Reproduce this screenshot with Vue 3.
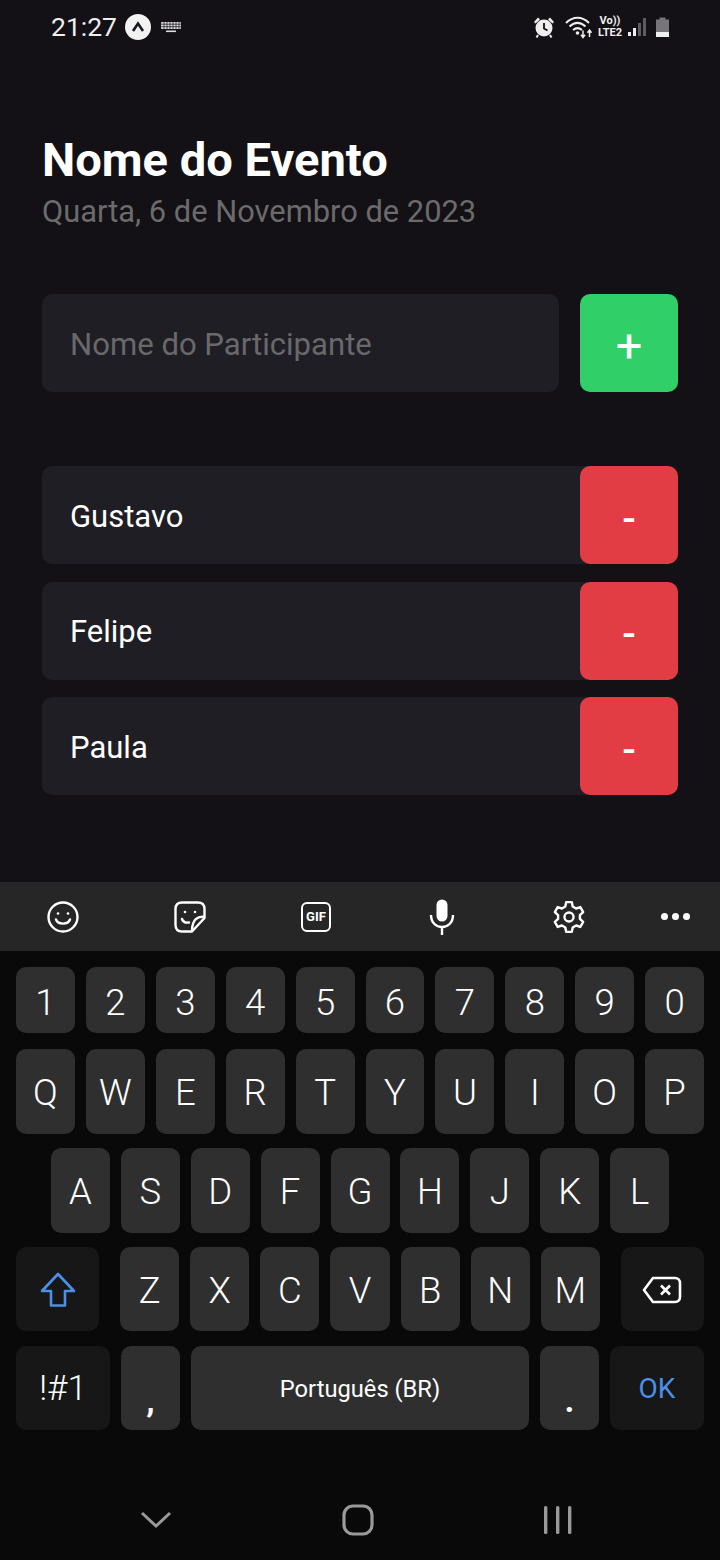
<template>
  <div class="screen">
    <div class="status-bar">
      <span class="time">21:27</span>
      <span class="expo-logo">
        <svg width="14" height="12" viewBox="0 0 14 12"><path d="M2 10 L7 2.5 L12 10" fill="none" stroke="#1a181c" stroke-width="2.6" /></svg>
      </span>
      <svg class="kbd-icon" width="22" height="12" viewBox="0 0 22 12">
        <rect x="1" y="1" width="20" height="7" rx="1" fill="#ddd" />
        <path d="M1 3.2H21M1 5.7H21M4 1V8M7 1V8M10 1V8M13 1V8M16 1V8M19 1V8" stroke="#131016" stroke-width=".7" />
        <rect x="6" y="9.5" width="10" height="1.6" fill="#ddd" />
      </svg>
      <div class="status-right">
        <svg width="24" height="24" viewBox="0 0 24 24">
          <circle cx="12" cy="13" r="8.5" fill="#eee" />
          <path d="M12 8V13.5L15.5 15.5" fill="none" stroke="#131016" stroke-width="1.8" />
          <path d="M2 7 L6 2.5 L8 4.5 L3.5 8.5Z M22 7 L18 2.5 L16 4.5 L20.5 8.5Z" fill="#eee" />
          <path d="M6 20L4.5 22.5M18 20L19.5 22.5" stroke="#eee" stroke-width="2" />
        </svg>
        <svg class="wifi" width="28" height="24" viewBox="0 0 28 24">
          <path d="M1 8C8 1 17 1 24 8M4.5 11.5C10 6.5 15 6.5 20.5 11.5M8 15C11 12.5 14 12.5 17 15" fill="none" stroke="#eee" stroke-width="2" />
          <circle cx="12.5" cy="18" r="1.8" fill="#eee" />
          <path d="M18 15.5V22M16 19.8L18 22.5L20 19.8M24.5 22V15.5M22.5 17.8L24.5 15L26.5 17.8" fill="none" stroke="#eee" stroke-width="1.5" />
        </svg>
        <span class="volte"><span>Vo))</span><span>LTE2</span></span>
        <svg width="20" height="22" viewBox="0 0 20 22">
          <rect x="1" y="16" width="3" height="4" fill="#eee" />
          <rect x="6" y="12" width="3" height="8" fill="#eee" />
          <rect x="11" y="7" width="3" height="13" fill="#5e5c60" />
          <rect x="16" y="2" width="3" height="18" fill="#5e5c60" />
        </svg>
        <svg class="battery" width="15" height="22" viewBox="0 0 15 22">
          <path d="M4.5 1.5H10.5V3.5H14V21H1V3.5H4.5Z" fill="#77757a" />
          <rect x="1" y="16" width="13" height="5" fill="#eee" />
        </svg>
      </div>
    </div>

    <main class="content">
      <h1 class="event-name">Nome do Evento</h1>
      <p class="event-date">Quarta, 6 de Novembro de 2023</p>

      <form class="add-form" @submit.prevent>
        <input class="name-input" type="text" placeholder="Nome do Participante" />
        <button class="btn btn-add">+</button>
      </form>

      <div class="participants">
        <div v-for="name in participants" :key="name" class="participant">
          <span class="participant-name">{{ name }}</span>
          <button class="btn btn-remove">-</button>
        </div>
      </div>
    </main>

    <div class="toolbar">
      <div class="tool">
        <svg width="34" height="34" viewBox="0 0 34 34" fill="none" stroke="#fff" stroke-width="2.4">
          <circle cx="17" cy="17" r="14.5" />
          <circle cx="12" cy="13.5" r="1.3" fill="#fff" stroke="none" />
          <circle cx="22" cy="13.5" r="1.3" fill="#fff" stroke="none" />
          <path d="M10 19.5C12 25 22 25 24 19.5" stroke-linecap="round" />
        </svg>
      </div>
      <div class="tool">
        <svg width="34" height="34" viewBox="0 0 34 34" fill="none" stroke="#fff" stroke-width="2.4" stroke-linejoin="round">
          <path d="M9 2.5H25C29 2.5 31.5 5 31.5 9V18L19 31.5H9C5 31.5 2.5 29 2.5 25V9C2.5 5 5 2.5 9 2.5Z" />
          <path d="M31.5 17C25 16 19 19 19 31" />
          <circle cx="12" cy="12" r="1.3" fill="#fff" stroke="none" />
          <circle cx="22" cy="12" r="1.3" fill="#fff" stroke="none" />
          <path d="M9 19C10 22 13 23 16 22.5" stroke-linecap="round" />
        </svg>
      </div>
      <div class="tool">
        <span class="gif-icon">GIF</span>
      </div>
      <div class="tool">
        <svg width="26" height="36" viewBox="0 0 26 36" fill="none" stroke="#fff" stroke-width="2.4">
          <rect x="7.5" y="0.5" width="11" height="22" rx="5.5" fill="#fff" stroke="none" />
          <path d="M2 16C2 32 24 32 24 16M13 27V36" />
        </svg>
      </div>
      <div class="tool">
        <svg width="34" height="34" viewBox="0 0 24 24" fill="none" stroke="#fff" stroke-width="1.7" stroke-linejoin="round">
          <circle cx="12" cy="12" r="3.2" />
          <path d="M10 1.5H14L14.6 4.6L17 6L20 5L22 8.5L19.7 10.6V13.4L22 15.5L20 19L17 18L14.6 19.4L14 22.5H10L9.4 19.4L7 18L4 19L2 15.5L4.3 13.4V10.6L2 8.5L4 5L7 6L9.4 4.6Z" />
        </svg>
      </div>
      <div class="tool dots"><i></i><i></i><i></i></div>
    </div>

    <div class="keyboard">
      <div class="key-row number-row">
        <span v-for="k in numbers" :key="k" class="key">{{ k }}</span>
      </div>
      <div class="key-row">
        <span v-for="k in rowOne" :key="k" class="key">{{ k }}</span>
      </div>
      <div class="key-row centered">
        <span v-for="k in rowTwo" :key="k" class="key">{{ k }}</span>
      </div>
      <div class="key-row">
        <span class="key fn wide shift">
          <svg width="36" height="36" viewBox="0 0 36 36" fill="none" stroke="#4a90e8" stroke-width="2.6" stroke-linejoin="round">
            <path d="M18 2L34 19H25V33.5H11V19H2Z" />
          </svg>
        </span>
        <span v-for="k in rowThree" :key="k" class="key">{{ k }}</span>
        <span class="key fn wide del">
          <svg width="40" height="30" viewBox="0 0 40 30" fill="none" stroke="#fff" stroke-width="2.6" stroke-linejoin="round">
            <path d="M11 3H33C36 3 38 5 38 8V22C38 25 36 27 33 27H11L2 15Z" />
            <path d="M19 10.5L28 19.5M28 10.5L19 19.5" />
          </svg>
        </span>
      </div>
      <div class="key-row">
        <span class="key fn symbols">!#1</span>
        <span class="key punct">,</span>
        <span class="key space">Português (BR)</span>
        <span class="key punct">.</span>
        <span class="key fn ok">OK</span>
      </div>
    </div>

    <div class="nav-bar">
      <svg width="32" height="20" viewBox="0 0 32 20" fill="none" stroke="#9a9a9a" stroke-width="3"><path d="M2 3L16 16L30 3" /></svg>
      <svg width="32" height="32" viewBox="0 0 32 32" fill="none" stroke="#9a9a9a" stroke-width="3.2"><rect x="2" y="2" width="28" height="28" rx="9" /></svg>
      <svg width="30" height="30" viewBox="0 0 30 30" fill="#9a9a9a">
        <rect x="1" y="1" width="3.4" height="28" rx="1.5" />
        <rect x="13" y="1" width="3.4" height="28" rx="1.5" />
        <rect x="25" y="1" width="3.4" height="28" rx="1.5" />
      </svg>
    </div>
  </div>
</template>

<script setup>
const participants = ['Gustavo', 'Felipe', 'Paula']

const numbers = ['1', '2', '3', '4', '5', '6', '7', '8', '9', '0']
const rowOne = ['Q', 'W', 'E', 'R', 'T', 'Y', 'U', 'I', 'O', 'P']
const rowTwo = ['A', 'S', 'D', 'F', 'G', 'H', 'J', 'K', 'L']
const rowThree = ['Z', 'X', 'C', 'V', 'B', 'N', 'M']
</script>

<style>
body {
  background: #131016;
}
</style>

<style scoped>
.screen {
  width: 720px;
  height: 1560px;
  display: flex;
  flex-direction: column;
  background: #131016;
  font-family: Roboto, "Liberation Sans", sans-serif;
  color: #fff;
  overflow: hidden;
}

.status-bar {
  height: 52px;
  flex-shrink: 0;
  display: flex;
  align-items: center;
  padding: 0 50px 0 51px;
}

.time {
  font-size: 26.5px;
  color: #eee;
}

.expo-logo {
  width: 26px;
  height: 26px;
  margin: 2px 0 0 8px;
  border-radius: 50%;
  background: #f2f2f2;
  display: flex;
  align-items: center;
  justify-content: center;
}

.kbd-icon {
  margin: 2px 0 0 9px;
}

.status-right {
  margin: 1px 0 0 auto;
  display: flex;
  align-items: center;
  gap: 5px;
}

.wifi {
  margin-left: 4px;
}

.volte {
  display: flex;
  flex-direction: column;
  align-items: center;
  font-size: 11px;
  line-height: 12px;
  font-weight: 700;
  color: #eee;
}

.battery {
  margin-left: 3px;
}

.content {
  flex: 1;
  padding: 0 42px;
}

.event-name {
  margin: 80px 0 0;
  font-size: 47.1px;
  line-height: 56px;
  font-weight: 700;
}

.event-date {
  margin: 6px 0 0;
  font-size: 30.85px;
  line-height: 36px;
  color: #6b6b6b;
}

.add-form {
  display: flex;
  gap: 21px;
  margin-top: 64px;
}

.name-input {
  flex: 1;
  min-width: 0;
  height: 98px;
  box-sizing: border-box;
  padding: 2px 28px 0;
  border: none;
  border-radius: 10px;
  outline: none;
  background: #1f1e25;
  color: #fff;
  font-family: inherit;
  font-size: 31.1px;
}

.name-input::placeholder {
  color: #69696b;
  opacity: 1;
}

.btn {
  width: 98px;
  height: 98px;
  flex-shrink: 0;
  border: none;
  border-radius: 10px;
  color: #fff;
  font-family: inherit;
  font-size: 47px;
  font-weight: 400;
  line-height: 1;
}

.btn-add {
  background: #31cf67;
  padding-top: 6px;
}

.btn-remove {
  background: #e23c44;
  font-size: 40px;
  font-weight: 500;
  padding-top: 10px;
}

.participants {
  margin-top: 74px;
  display: flex;
  flex-direction: column;
  gap: 17.5px;
}

.participant {
  display: flex;
  align-items: center;
  background: #1f1e25;
  border-radius: 10px;
}

.participant-name {
  flex: 1;
  padding: 2px 0 0 28px;
  font-size: 31px;
}

.toolbar {
  height: 69px;
  flex-shrink: 0;
  display: grid;
  grid-template-columns: repeat(5, 126.4px) 1fr;
  background: #262626;
}

.tool {
  display: flex;
  align-items: center;
  justify-content: center;
}

.gif-icon {
  width: 30px;
  height: 30px;
  box-sizing: border-box;
  display: flex;
  align-items: center;
  justify-content: center;
  border: 2.4px solid #fff;
  border-radius: 6px;
  font-size: 13px;
  font-weight: 700;
}

.dots {
  gap: 4px;
}

.dots i {
  width: 7px;
  height: 7px;
  border-radius: 50%;
  background: #fff;
}

.keyboard {
  flex-shrink: 0;
  padding: 16px 16px 0;
  background: #090909;
  display: flex;
  flex-direction: column;
  gap: 14.25px;
}

.key-row {
  height: 84.5px;
  display: flex;
  gap: 11px;
}

.number-row {
  height: 66px;
  margin-bottom: 2px;
}

.number-row .key {
  padding-top: 4px;
  box-sizing: border-box;
}

.centered {
  justify-content: center;
  gap: 10.9px;
}

.key {
  flex: 0 0 59px;
  display: flex;
  align-items: center;
  justify-content: center;
  border-radius: 10px;
  background: #2f2f2f;
  padding-top: 2px;
  box-sizing: border-box;
  font-size: 36.5px;
  font-weight: 350;
  color: #fff;
}

.key-row:not(.centered) .key {
  flex: 1 1 0;
  min-width: 0;
}

.key-row .key.fn {
  background: #171717;
}

.key-row .key.wide {
  flex: 0 0 83px;
}

.shift {
  margin-right: 10px;
}

.del {
  margin-left: 10px;
}

.key-row .key.symbols,
.key-row .key.ok {
  flex: 0 0 94px;
  font-size: 35px;
  font-weight: 300;
}

.key-row .key.ok {
  color: #4a90e8;
  font-size: 28px;
  font-weight: 400;
}

.key-row .key.punct {
  flex: 0 0 59px;
  padding-top: 24px;
  font-weight: 700;
  font-size: 34px;
}

.key-row .key.space {
  flex: 1 1 0;
  font-size: 23.7px;
  font-weight: 400;
}

.nav-bar {
  flex: 0 0 130px;
  background: #090909;
  display: flex;
  align-items: center;
  justify-content: space-between;
  padding: 50px 147px 0 140px;
  box-sizing: border-box;
}
</style>
